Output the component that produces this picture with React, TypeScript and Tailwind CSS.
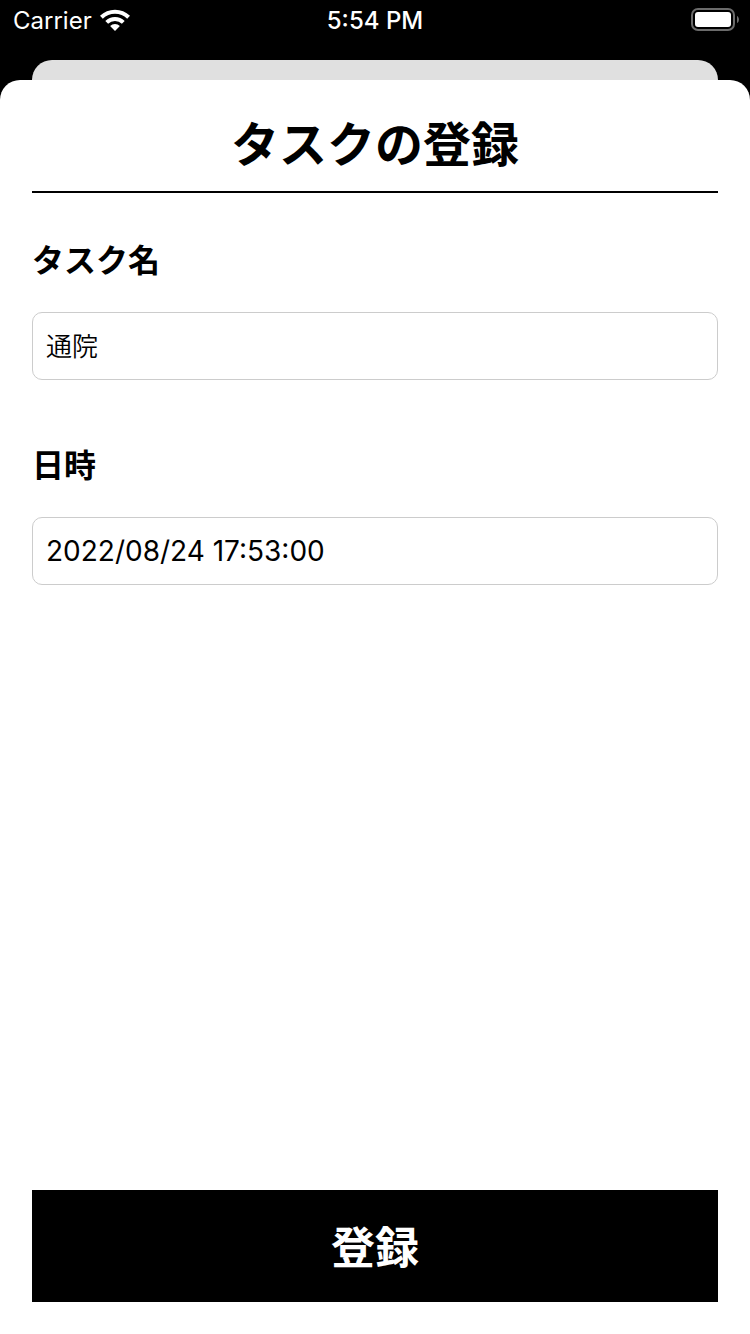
import { useState } from 'react';

function WifiIcon() {
  return (
    <svg width="30" height="22" viewBox="0 0 30 22" fill="none" stroke="white" strokeWidth="4" aria-hidden="true">
      <path d="M1.4 8.2 A19.4 19.4 0 0 1 28.6 8.2" />
      <path d="M6.7 13.4 A11.9 11.9 0 0 1 23.3 13.4" />
      <path d="M15 22 L10.1 17.1 A7 7 0 0 1 19.9 17.1 Z" fill="white" stroke="none" />
    </svg>
  );
}

function BatteryIcon() {
  return (
    <svg width="48" height="24" viewBox="0 0 48 24" aria-hidden="true">
      <rect x="1" y="1" width="42" height="21" rx="6" fill="none" stroke="#6b6b6b" strokeWidth="2" />
      <rect x="4" y="4" width="36" height="15" rx="3" fill="white" />
      <path d="M46 8 C48.6 9 48.6 14 46 15 Z" fill="#6b6b6b" />
    </svg>
  );
}

function StatusBar() {
  return (
    <header className="grid h-[60px] grid-cols-3 items-start px-[13px] pt-1 text-[24px] text-white">
      <div className="flex h-8 items-center gap-2">
        <span className="pt-[2px] leading-8">Carrier</span>
        <WifiIcon />
      </div>
      <div className="text-center leading-[34px] font-medium">5:54 PM</div>
      <div className="-mr-[2px] flex h-8 items-center justify-end">
        <BatteryIcon />
      </div>
    </header>
  );
}

type FieldProps = {
  id: string;
  label: string;
  value: string;
  onChange: (value: string) => void;
  sizeClass: string;
};

function Field({ id, label, value, onChange, sizeClass }: FieldProps) {
  return (
    <div className="flex flex-col gap-7">
      <label htmlFor={id} className="text-[32px] leading-[46px] font-bold">
        {label}
      </label>
      <input
        id={id}
        type="text"
        value={value}
        onChange={(event) => onChange(event.target.value)}
        className={`h-[68px] w-full rounded-[10px] border border-[#cccccc] bg-white px-[13px] outline-none ${sizeClass}`}
      />
    </div>
  );
}

export default function App() {
  const [name, setName] = useState('通院');
  const [date, setDate] = useState('2022/08/24 17:53:00');

  return (
    <div className="flex min-h-screen flex-col bg-black font-['Inter','Noto_Sans_CJK_JP',sans-serif] text-black">
      <StatusBar />
      <div className="mx-8 h-5 rounded-t-[20px] bg-[#e0e0e0]" />
      <main className="flex grow flex-col rounded-t-[20px] bg-white px-8 pt-7 pb-8">
        <h1 className="border-b-2 border-black pb-[9px] text-center text-[48px] leading-[74px] font-bold">
          タスクの登録
        </h1>
        <form className="flex grow flex-col" onSubmit={(event) => event.preventDefault()}>
          <div className="flex flex-col gap-[63px] pt-[45px]">
            <Field id="task-name" label="タスク名" value={name} onChange={setName} sizeClass="pb-1 font-[350] text-[26px]" />
            <Field id="task-date" label="日時" value={date} onChange={setDate} sizeClass="text-[28px]" />
          </div>
          <button type="submit" className="mt-auto h-28 w-full bg-black pt-1 text-[44px] font-bold text-white">
            登録
          </button>
        </form>
      </main>
    </div>
  );
}
